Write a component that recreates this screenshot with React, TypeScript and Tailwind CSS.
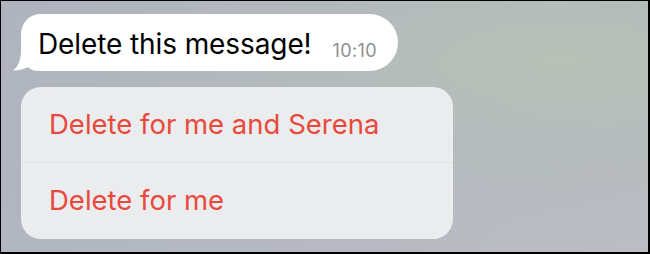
import React from 'react';

const font = { fontFamily: 'Inter, "Noto Sans", sans-serif' };

function Bubble() {
    return (
        <div className="relative flex h-[57px] w-[377px] items-end rounded-tl-[20px] rounded-bl-[18px] rounded-r-[29px] bg-white pl-[17px] pr-[21px] pb-[11px]">
            {/* tail */}
            <svg
                className="absolute bottom-0 left-[-8px]"
                width="18"
                height="21"
                viewBox="0 0 18 21"
                fill="#ffffff"
            >
                <path d="M8 0 C8 10 5 17 0 20.5 C6 20.5 13 19 18 15 L18 0 Z" />
            </svg>
            <span className="text-[28px] leading-[32px] tracking-[-0.1px] text-black">Delete this message!</span>
            <span className="ml-auto mb-[-1px] text-[18px] leading-[20px] tracking-[0.4px] text-[#8e8e93]">10:10</span>
        </div>
    );
}

export default function App() {
    return (
        <div
            style={font}
            className="flex h-[254px] w-[650px] flex-col border-t border-l border-r-2 border-b-2 border-black bg-[radial-gradient(ellipse_at_86%_24%,rgba(184,194,182,0.95)_0%,rgba(182,190,186,0.6)_30%,rgba(176,181,191,0)_70%),linear-gradient(160deg,#aeb3be_0%,#b1b6c0_50%,#bcbdc5_100%)] pl-[20px] pt-[13px]"
        >
            <Bubble />

            <div className="mt-[16px] flex w-[432px] flex-col rounded-[20px] bg-[#ebecee]">
                <div className="flex h-[75px] items-center pl-[28px] text-[27.5px] text-[#e8493c]">
                    Delete for me and Serena
                </div>
                <div className="h-px bg-[#e2e3e5]" />
                <div className="flex h-[76px] items-center pl-[28px] text-[27.5px] text-[#e8493c]">
                    Delete for me
                </div>
            </div>
        </div>
    );
}
